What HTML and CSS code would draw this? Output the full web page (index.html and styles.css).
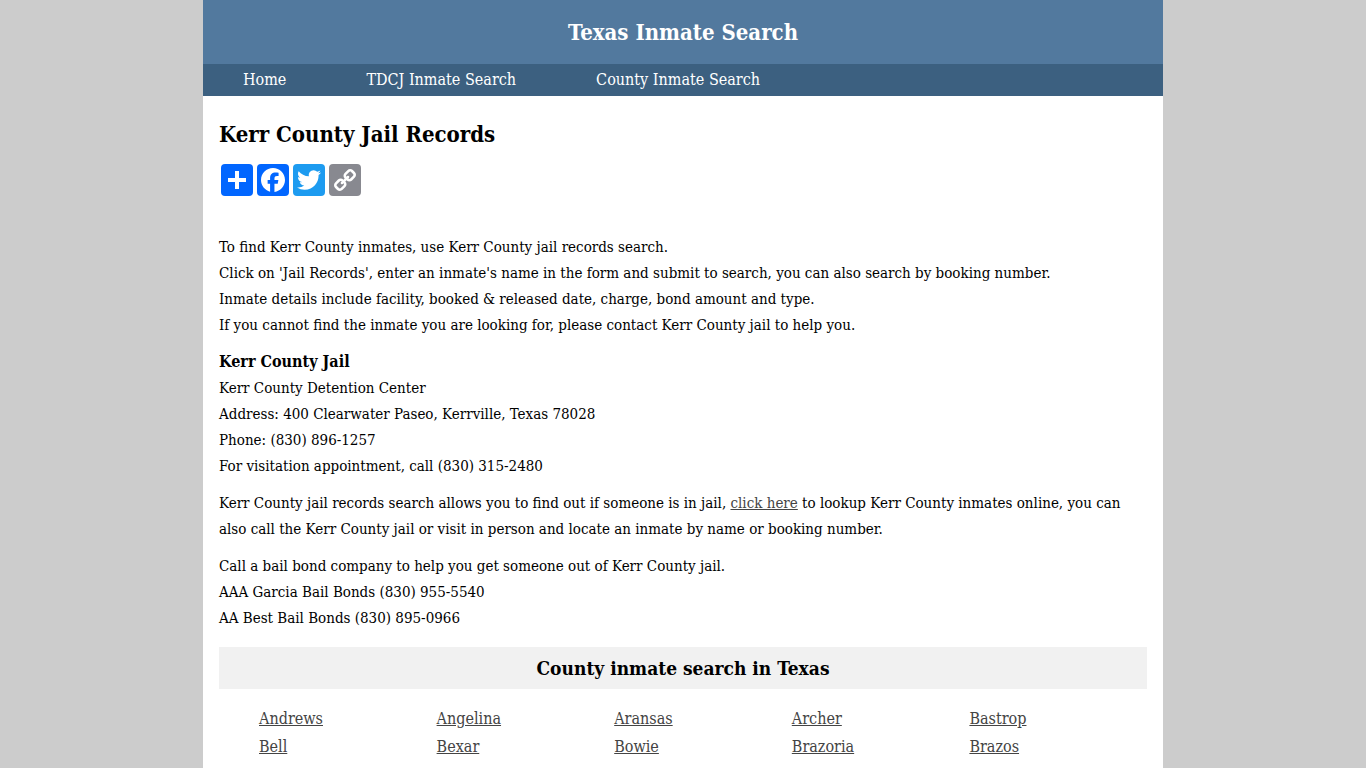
FILE: index.html
```html
<!DOCTYPE html>
<html lang="en">
<head>
    <meta charset="UTF-8">
    <meta name="viewport" content="width=device-width, initial-scale=1.0">
    <title>Kerr County Jail Records</title>
    <link rel="stylesheet" href="styles.css">
</head>
<body>
    <div class="container">
        <header class="header">Texas Inmate Search</header>
        <nav class="menu">
            <a href="#">Home</a>
            <a href="#">TDCJ Inmate Search</a>
            <a href="#">County Inmate Search</a>
        </nav>
        <main class="content">
            <h1>Kerr County Jail Records</h1>
            <div class="share">
                <a class="share-blue" href="#" aria-label="Share">
                    <svg viewBox="0 0 32 32"><path d="M14 7h4v18h-4z"/><path d="M7 14h18v4H7z"/></svg>
                </a>
                <a class="share-blue" href="#" aria-label="Facebook">
                    <svg viewBox="0 0 32 32"><path d="M28 16c0-6.627-5.373-12-12-12S4 9.373 4 16c0 5.628 3.875 10.35 9.101 11.647v-7.98h-2.474V16H13.1v-1.58c0-4.085 1.849-5.978 5.859-5.978.76 0 2.072.15 2.608.298v3.325c-.283-.03-.775-.045-1.386-.045-1.967 0-2.728.745-2.728 2.683V16h3.92l-.673 3.667h-3.247v8.245C23.395 27.195 28 22.135 28 16"/></svg>
                </a>
                <a class="share-twitter" href="#" aria-label="Twitter">
                    <svg viewBox="0 0 32 32"><path d="M28 8.557a10 10 0 0 1-2.828.775 4.93 4.93 0 0 0 2.166-2.725 9.7 9.7 0 0 1-3.13 1.194 4.92 4.92 0 0 0-3.593-1.55 4.924 4.924 0 0 0-4.794 6.049c-4.09-.21-7.72-2.17-10.15-5.15a4.94 4.94 0 0 0-.665 2.477c0 1.71.87 3.214 2.19 4.1a5 5 0 0 1-2.23-.616v.06c0 2.39 1.7 4.38 3.952 4.83-.414.115-.85.174-1.297.174q-.476-.001-.928-.086a4.935 4.935 0 0 0 4.6 3.42 9.9 9.9 0 0 1-6.114 2.107q-.597 0-1.175-.067a13.95 13.95 0 0 0 7.55 2.213c9.056 0 14.01-7.507 14.01-14.013q0-.32-.015-.637c.96-.695 1.795-1.56 2.455-2.55z"/></svg>
                </a>
                <a class="share-link" href="#" aria-label="Copy link">
                    <svg viewBox="0 0 32 32"><path d="M7.591 21.177c0-.36.126-.665.377-.917l2.804-2.804a1.235 1.235 0 0 1 .913-.378c.377 0 .7.144.97.43-.026.028-.11.11-.255.25-.144.14-.24.236-.29.29a2.82 2.82 0 0 0-.2.256 1.056 1.056 0 0 0-.177.344 1.43 1.43 0 0 0-.046.37c0 .36.126.666.377.918a1.25 1.25 0 0 0 .918.377c.126.001.251-.015.373-.047.125-.037.242-.096.345-.175.09-.06.176-.127.256-.2.1-.094.196-.19.29-.29.14-.142.223-.23.25-.254.297.28.445.607.445.984 0 .36-.126.664-.377.916l-2.778 2.79a1.242 1.242 0 0 1-.917.364c-.36 0-.665-.118-.917-.35l-1.982-1.97a1.223 1.223 0 0 1-.378-.9l-.001-.004Zm9.477-9.504c0-.36.126-.665.377-.917l2.777-2.79a1.235 1.235 0 0 1 .913-.378c.35 0 .656.12.917.364l1.984 1.968c.254.252.38.553.38.903 0 .36-.126.665-.38.917l-2.802 2.804a1.238 1.238 0 0 1-.916.364c-.377 0-.7-.14-.97-.418.026-.027.11-.11.255-.25a7.5 7.5 0 0 0 .29-.29c.072-.08.139-.166.2-.255.08-.103.14-.22.176-.344.032-.12.048-.245.047-.37 0-.36-.126-.662-.377-.914a1.247 1.247 0 0 0-.917-.377c-.136 0-.26.015-.37.046-.114.03-.23.09-.346.175a3.868 3.868 0 0 0-.256.2c-.054.05-.15.148-.29.29-.14.146-.222.23-.25.258-.294-.278-.442-.606-.442-.983v-.003ZM5.003 21.177c0 1.078.382 1.99 1.146 2.736l1.982 1.968c.745.75 1.658 1.12 2.736 1.12 1.087 0 2.004-.38 2.75-1.143l2.777-2.79c.75-.747 1.12-1.66 1.12-2.737 0-1.106-.392-2.046-1.183-2.818l1.186-1.185c.774.79 1.708 1.186 2.805 1.186 1.078 0 1.995-.376 2.75-1.13l2.803-2.81c.751-.754 1.128-1.671 1.128-2.748 0-1.08-.382-1.993-1.146-2.738L23.875 6.12C23.13 5.372 22.218 5 21.139 5c-1.087 0-2.004.382-2.75 1.146l-2.777 2.79c-.75.747-1.12 1.66-1.12 2.737 0 1.105.392 2.045 1.183 2.817l-1.186 1.186c-.774-.79-1.708-1.186-2.805-1.186-1.078 0-1.995.377-2.75 1.132L6.13 18.426c-.754.755-1.13 1.672-1.13 2.75l.003.001Z"/></svg>
                </a>
            </div>

            <p>To find Kerr County inmates, use Kerr County jail records search.<br>
            Click on 'Jail Records', enter an inmate's name in the form and submit to search, you can also search by booking number.<br>
            Inmate details include facility, booked &amp; released date, charge, bond amount and type.<br>
            If you cannot find the inmate you are looking for, please contact Kerr County jail to help you.</p>

            <p><strong>Kerr County Jail</strong><br>
            Kerr County Detention Center<br>
            Address: 400 Clearwater Paseo, Kerrville, Texas 78028<br>
            Phone: (830) 896-1257<br>
            For visitation appointment, call (830) 315-2480</p>

            <p>Kerr County jail records search allows you to find out if someone is in jail, <a href="#">click here</a> to lookup Kerr County inmates online, you can also call the Kerr County jail or visit in person and locate an inmate by name or booking number.</p>

            <p>Call a bail bond company to help you get someone out of Kerr County jail.<br>
            AAA Garcia Bail Bonds (830) 955-5540<br>
            AA Best Bail Bonds (830) 895-0966</p>

            <h2>County inmate search in Texas</h2>
            <ul class="counties">
                <li><a href="#">Andrews</a></li>
                <li><a href="#">Angelina</a></li>
                <li><a href="#">Aransas</a></li>
                <li><a href="#">Archer</a></li>
                <li><a href="#">Bastrop</a></li>
                <li><a href="#">Bell</a></li>
                <li><a href="#">Bexar</a></li>
                <li><a href="#">Bowie</a></li>
                <li><a href="#">Brazoria</a></li>
                <li><a href="#">Brazos</a></li>
            </ul>
        </main>
    </div>
</body>
</html>
```
FILE: styles.css
```css
* {
    box-sizing: border-box;
}
body {
    margin: 0;
    background-color: #ccc;
    color: #000;
    font-family: "DejaVu Serif Condensed", "Liberation Serif", serif;
    font-size: 16px;
    line-height: 26px;
}
a {
    color: #444;
}

.container {
    max-width: 960px;
    min-height: 100vh;
    margin: 0 auto;
    background-color: #fff;
}

.header {
    padding: 16px;
    background-color: #52799e;
    color: #fff;
    font-size: 22px;
    font-weight: bold;
    line-height: 32px;
    text-align: center;
}

.menu {
    display: flex;
    background-color: #3c6080;
}
.menu a {
    padding: 0 40px;
    color: #fff;
    line-height: 32px;
    text-decoration: none;
}

.content {
    padding: 20px 16px 0;
}

h1 {
    margin: 0;
    font-size: 22px;
    line-height: 36px;
}

.share {
    display: flex;
    gap: 4px;
    padding: 12px 2px 38px;
}
.share a {
    width: 32px;
    height: 32px;
    border-radius: 4px;
}
.share svg {
    display: block;
    fill: #fff;
}
.share .share-blue {
    background-color: #0166ff;
}
.share .share-twitter {
    background-color: #1d9bf0;
}
.share .share-link {
    background-color: #888990;
}

p {
    margin: 0 0 11px;
    font-size: 15px;
}
strong {
    font-size: 16px;
}

h2 {
    margin: 16px 0;
    background-color: #f1f1f1;
    font-size: 19px;
    line-height: 42px;
    text-align: center;
}

.counties {
    display: grid;
    grid-template-columns: repeat(5, 1fr);
    margin: 0;
    padding: 0 0 0 40px;
    line-height: 28px;
    list-style: none;
}
```
